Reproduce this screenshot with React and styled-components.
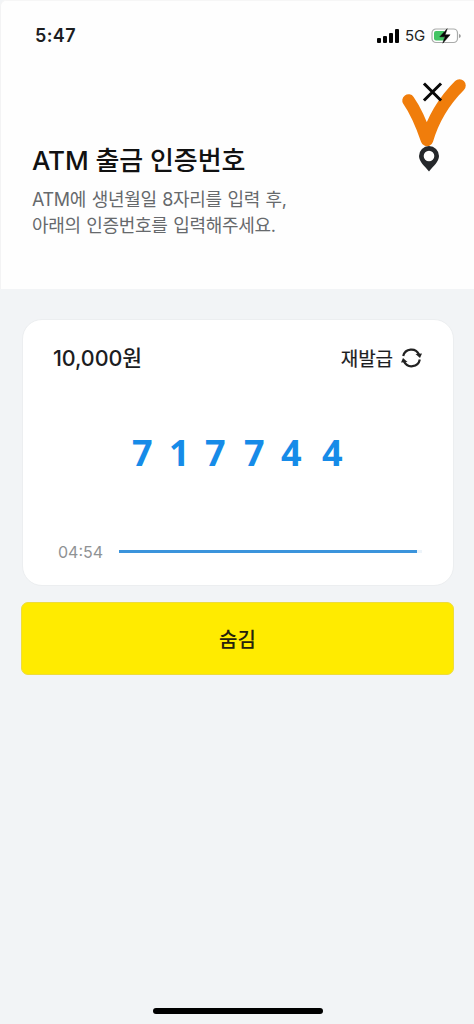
import React from "react";
import styled, { createGlobalStyle } from "styled-components";

const GlobalStyle = createGlobalStyle`
  * { box-sizing: border-box; }
  body {
    margin: 0;
    background: #f2f4f6;
    font-family: Inter, "Noto Sans CJK KR", sans-serif;
    color: #1c1d1f;
  }
`;

const Screen = styled.div`
  width: 474px;
  height: 1024px;
  display: flex;
  flex-direction: column;
  background: #f2f4f6;
  overflow: hidden;
`;

const Header = styled.header`
  position: relative;
  height: 289px;
  flex: none;
  background: #fefefe;
  border-left: 1px solid #f3f3f4;
  border-top: 1px solid #f6f6f6;
  border-top-left-radius: 6px;
`;

const StatusBar = styled.div`
  height: 70px;
  padding: 0 13px 0 34px;
  display: flex;
  align-items: center;
  justify-content: space-between;
`;

const Clock = styled.time`
  font-size: 18px;
  font-weight: 600;
  line-height: 24px;
  letter-spacing: 0.4px;
`;

const StatusIcons = styled.div`
  display: flex;
  align-items: center;
`;

const Network = styled.span`
  width: 32px;
  padding-left: 6px;
  font-size: 15px;
  line-height: 20px;
  letter-spacing: -0.2px;
  color: #222;
`;

const Intro = styled.div`
  padding: 71px 31px 0;
`;

const Title = styled.h1`
  margin: 0;
  font-size: 26px;
  font-weight: 500;
  line-height: 38px;
  letter-spacing: -0.08px;
  white-space: nowrap;
  color: #111;
`;

const Description = styled.p`
  margin: 7px 0 0;
  font-size: 18px;
  line-height: 26px;
  letter-spacing: -0.32px;
  word-spacing: 0.9px;
  white-space: nowrap;
  color: #66696c;
`;

const Annotation = styled.svg`
  position: absolute;
  left: 383px;
  top: 64px;
`;

const Main = styled.main`
  flex: 1;
  padding: 30px 20px 0 21px;
`;

const Card = styled.section`
  height: 267px;
  margin: 0 0 0 1px;
  padding: 23px 31px 0 30px;
  display: flex;
  flex-direction: column;
  background: #fff;
  border: 1px solid #eceef0;
  border-radius: 20px;
`;

const CardTop = styled.div`
  height: 30px;
  display: flex;
  align-items: center;
  justify-content: space-between;
`;

const Amount = styled.span`
  font-size: 21.5px;
  font-weight: 500;
  letter-spacing: -0.1px;
  line-height: 30px;
`;

const Reissue = styled.button`
  display: flex;
  align-items: center;
  gap: 8px;
  padding: 0;
  border: 0;
  background: none;
  color: #1c1d1f;
  font-family: "Noto Sans CJK KR", sans-serif;
  font-size: 19px;
  letter-spacing: -0.1px;
  line-height: 28px;
  -webkit-text-stroke: 0.2px #1c1d1f;
`;

const Code = styled.div`
  width: 218px;
  margin: 57px 0 0 79px;
  display: grid;
  grid-template-columns: 37px 36px 39px 37px 41px 28px;
  font-family: "Noto Sans", sans-serif;
  font-size: 36px;
  font-weight: 700;
  line-height: 46px;
  color: #168be8;
`;

const Timer = styled.div`
  margin-top: 60px;
  padding-left: 5px;
  display: flex;
  align-items: center;
  height: 30px;
`;

const Remaining = styled.span`
  width: 61px;
  padding-top: 1px;
  font-size: 16px;
  letter-spacing: 0;
  color: #8f9294;
`;

const Track = styled.div`
  width: 303px;
  height: 3px;
  background: #edf4fa;
`;

const Progress = styled.div`
  width: ${(p) => p.$width}px;
  height: 3px;
  background: #3b94dc;
`;

const HideButton = styled.button`
  width: 100%;
  height: 73px;
  margin-top: 16px;
  padding: 0;
  display: flex;
  align-items: center;
  justify-content: center;
  background: #ffeb00;
  border: 1px solid #eedc3c;
  border-radius: 7px;
  color: #25220c;
  font-family: "Noto Sans CJK KR", sans-serif;
  font-size: 20px;
  font-weight: 500;
  line-height: 30px;
`;

const Footer = styled.footer`
  height: 16px;
  display: flex;
  justify-content: center;
`;

const HomeIndicator = styled.div`
  width: 170px;
  height: 6px;
  margin-left: 2px;
  border-radius: 3px;
  background: #000;
`;

const SignalIcon = () => (
  <svg width="22" height="14" viewBox="0 0 22 14" fill="#050505">
    <rect x="0" y="9" width="4" height="5" rx="1" />
    <rect x="6" y="7" width="4" height="7" rx="1" />
    <rect x="12" y="4" width="4" height="10" rx="1" />
    <rect x="18" y="0" width="4" height="14" rx="1" />
  </svg>
);

const BatteryIcon = () => (
  <svg width="30" height="18" viewBox="0 0 30 18">
    <rect x="1" y="2" width="25.5" height="13.5" rx="4" fill="#fff" stroke="#a9abaa" strokeWidth="1.2" />
    <path d="M5 4h8v9.5H5a2 2 0 0 1-2-2V6a2 2 0 0 1 2-2Z" fill="#43c464" />
    <path d="M28 7v4q1.8-.6 1.8-2T28 7Z" fill="#999" />
    <path d="M16.2 1.7 8.8 9.8h5l-2 6.4 7.3-8.4h-5Z" fill="#080808" stroke="#080808" strokeWidth=".5" />
  </svg>
);

const Marks = () => (
  <Annotation width="90" height="120" viewBox="0 0 90 120" fill="none">
    <path d="M24.5 35.5Q34 49 43 75Q52 44 75.500 20.500" stroke="#f07d0b" strokeWidth="12.5" strokeLinecap="round" strokeLinejoin="round" />
    <path d="m41 19.500 15 15M56 19.500 41 34.500" stroke="#080808" strokeWidth="3" strokeLinecap="square" />
    <path d="M45 81a10 10 0 0 0-10 10c0 5.8 5.7 10.1 10 15.5C49.3 101.1 55 96.8 55 91a10 10 0 0 0-10-10Z" fill="#25282b" />
    <circle cx="45" cy="91" r="5.3" fill="#fff" />
  </Annotation>
);

const RefreshIcon = () => (
  <svg width="21" height="20" viewBox="0 0 21 20" fill="none" stroke="#222" strokeWidth="2.2">
    <path d="M2.2 8A8.4 8.4 0 0 1 18 6.5M18.8 11.5A8.4 8.4 0 0 1 3 13.5" />
    <path d="m14.5 6 6.5-.6-2 4.500ZM6.500 14l-6.500.6 2-4.500Z" fill="#222" stroke="none" />
  </svg>
);

export default function App() {
  return (
    <>
      <GlobalStyle />
      <Screen>
        <Header>
          <StatusBar>
            <Clock>5:47</Clock>
            <StatusIcons>
              <SignalIcon />
              <Network>5G</Network>
              <BatteryIcon />
            </StatusIcons>
          </StatusBar>
          <Intro>
            <Title>ATM 출금 인증번호</Title>
            <Description>
              ATM에 생년월일 8자리를 입력 후,
              <br />
              아래의 인증번호를 입력해주세요.
            </Description>
          </Intro>
          <Marks />
        </Header>
        <Main>
          <Card>
            <CardTop>
              <Amount>10,000원</Amount>
              <Reissue>
                재발급
                <RefreshIcon />
              </Reissue>
            </CardTop>
            <Code>
              {"717744".split("").map((digit, i) => (
                <span key={i}>{digit}</span>
              ))}
            </Code>
            <Timer>
              <Remaining>04:54</Remaining>
              <Track>
                <Progress $width={298} />
              </Track>
            </Timer>
          </Card>
          <HideButton>숨김</HideButton>
        </Main>
        <Footer>
          <HomeIndicator />
        </Footer>
      </Screen>
    </>
  );
}
